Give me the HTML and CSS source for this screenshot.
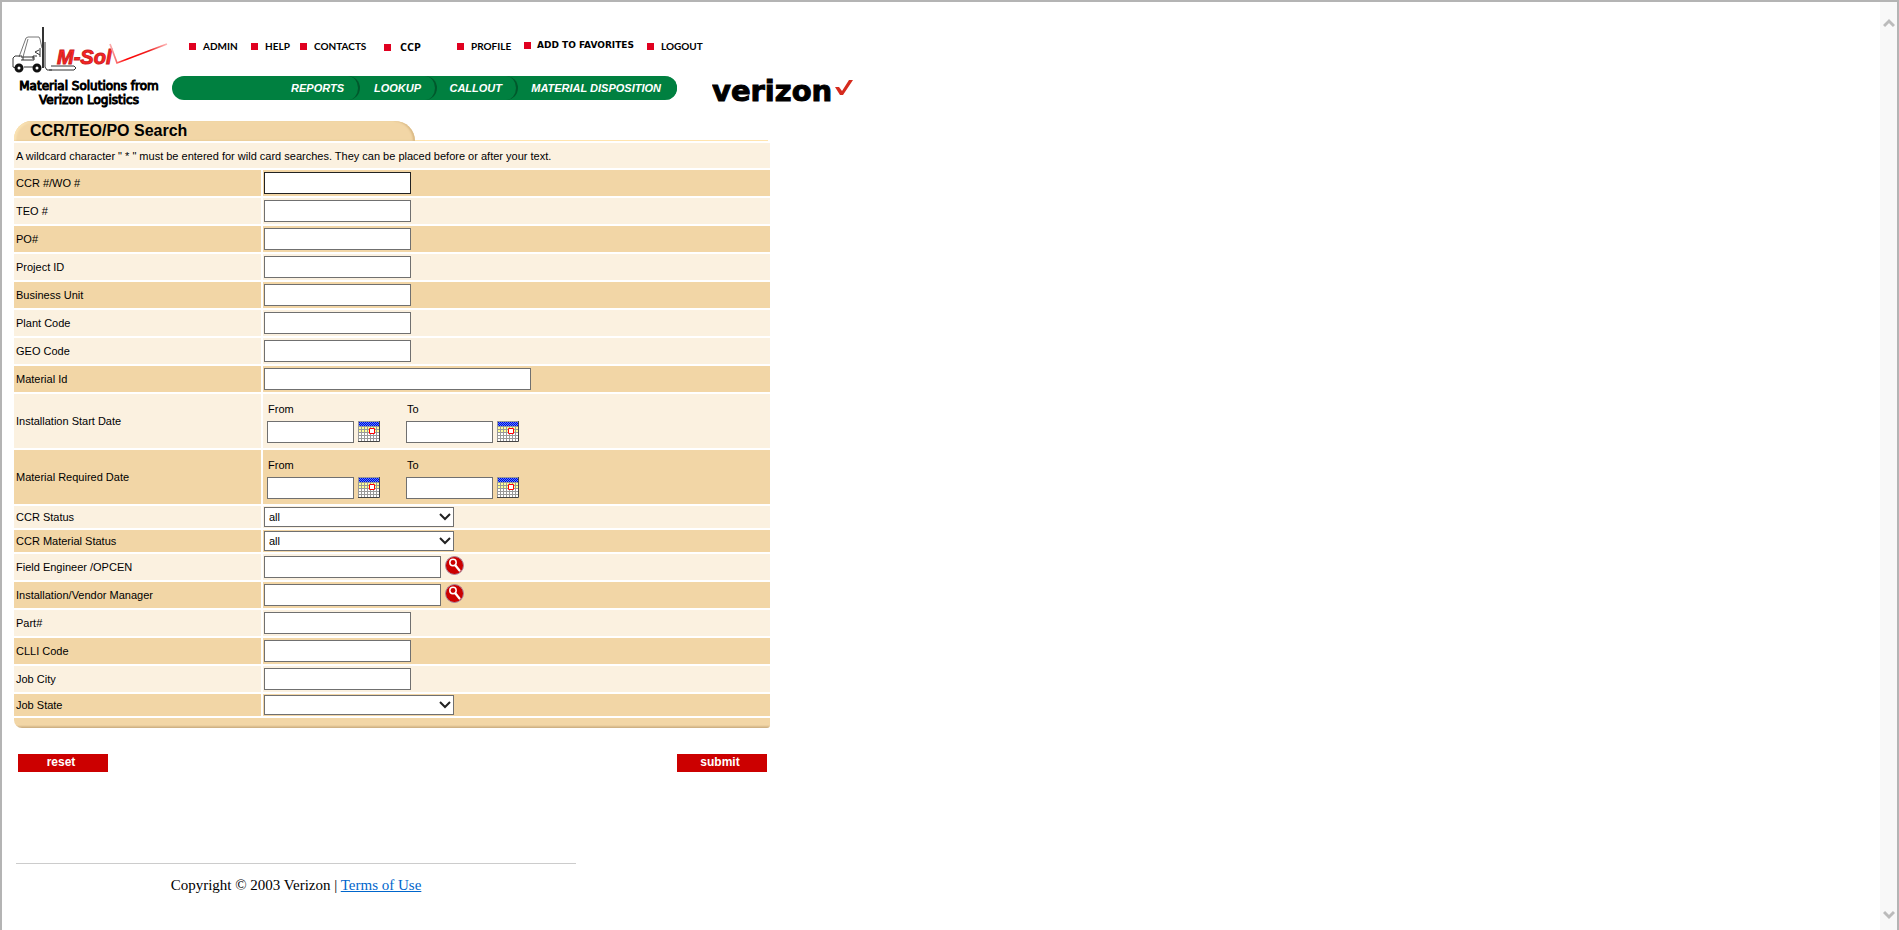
FILE: index.html
```html
<!DOCTYPE html>
<html lang="en">
<head>
<meta charset="utf-8">
<title>CCR/TEO/PO Search</title>
<link rel="stylesheet" href="styles.css">
</head>
<body>
<svg class="defs" aria-hidden="true">
  <symbol id="calendar" viewBox="0 0 22 21">
    <path fill="#fff" d="M0 0h22v21H0z"/>
    <path fill="#ffff99" d="M1 5h20v7H1z"/>
    <path fill="#5588ff" d="M0 0h22v5H0z"/>
    <path stroke="#0000dd" stroke-dasharray="1 1" d="M1 1.500h20M2 2.500h20M1 3.500h20M2 4.500h20"/>
    <path fill="none" stroke="#999" d="M.5 0v20M3.500 5v15M6.500 5v15M9.500 5v15M12.500 5v15M15.500 5v15M18.500 5v15M1 .5h20M1 5.500h20M1 8.500h20M1 11.500h20M1 14.500h20M1 17.500h20"/>
    <path fill="#fff" stroke="#f00" d="M11.500 7.500h5v5h-5z"/>
    <path fill="none" stroke="#444" d="M0 20.500h21.500V0"/>
  </symbol>
  <symbol id="search" viewBox="0 0 19 19">
    <circle cx="9.500" cy="9.500" r="9" fill="#c00" stroke="#a9849c"/>
    <circle cx="8" cy="6.500" r="3.200" fill="none" stroke="#fff" stroke-width="1.500"/>
    <path stroke="#fff" stroke-width="2.200" stroke-linecap="round" d="M10.500 9.500l4 5"/>
  </symbol>
</svg>
<div class="window">
<main class="page">
  <header class="header">
    <div class="brand">
      <svg class="msol" viewBox="0 0 160 50" role="img" aria-label="M-Sol">
        <defs><linearGradient id="fade"><stop offset="0" stop-color="#f9b0b0"/><stop offset=".3" stop-color="#f00"/><stop offset=".7" stop-color="#e22"/><stop offset="1" stop-color="#fbb"/></linearGradient></defs>
        <g fill="none" stroke="#333">
          <path stroke="#777" d="M7 31L14 12l2-1h11l1 2 2 9M16 13l-5 18"/>
          <path d="M11 34v-3M28 22v9M9 31h13v3H9M1 32l2-2h7M1 32v9l3 1M12 41h10M37 44h25l2-2-2-2H39"/>
          <path stroke-width="2" d="M31 1v41"/>
          <path d="M33 16v25l2 3h5M27 24l-4 2 5 3M21 33v-3h4"/>
        </g>
        <g fill="#fff" stroke="#111" stroke-width="3"><circle cx="7" cy="42" r="3"/><circle cx="25" cy="42" r="3"/></g>
        <text class="msol-text" x="45" y="38">M-Sol</text>
        <path fill="none" stroke="url(#fade)" stroke-width="1.700" d="M98 18l7 19 50-19"/>
      </svg>
      <p class="tagline">Material Solutions from<br>Verizon Logistics</p>
    </div>
    <div class="menus">
      <nav class="links">
        <a href="#">ADMIN</a><a href="#">HELP</a><a href="#">CONTACTS</a><a href="#" class="ccp">CCP</a><a href="#">PROFILE</a><a href="#" class="fav">ADD TO FAVORITES</a><a href="#">LOGOUT</a>
      </nav>
      <nav class="tabs">
        <a href="#">REPORTS</a><a href="#">LOOKUP</a><a href="#">CALLOUT</a><a href="#">MATERIAL DISPOSITION</a>
      </nav>
    </div>
    <svg class="verizon" viewBox="0 0 142 26" role="img" aria-label="verizon">
      <text class="verizon-text" x="0" y="23">verizon</text>
      <path fill="#d52b1e" d="M123 9h4l3 4 7-11h4l-10 15h-3z"/>
    </svg>
  </header>

  <form class="search">
    <h1 class="title"><span>CCR/TEO/PO Search</span></h1>
    <table class="fields">
      <tr class="light intro"><td colspan="2">A wildcard character " * " must be entered for wild card searches. They can be placed before or after your text.</td></tr>
      <tr><th><label for="ccr">CCR #/WO #</label></th><td><input id="ccr" class="first" type="text"></td></tr>
      <tr class="light"><th><label for="teo">TEO #</label></th><td><input id="teo" type="text"></td></tr>
      <tr><th><label for="po">PO#</label></th><td><input id="po" type="text"></td></tr>
      <tr class="light"><th><label for="project">Project ID</label></th><td><input id="project" type="text"></td></tr>
      <tr><th><label for="unit">Business Unit</label></th><td><input id="unit" type="text"></td></tr>
      <tr class="light"><th><label for="plant">Plant Code</label></th><td><input id="plant" type="text"></td></tr>
      <tr class="light"><th><label for="geo">GEO Code</label></th><td><input id="geo" type="text"></td></tr>
      <tr><th><label for="material">Material Id</label></th><td><input id="material" class="wide" type="text"></td></tr>
      <tr class="light dates"><th>Installation Start Date</th><td><div class="range">
        <div class="date"><label for="isf">From</label><input id="isf" type="text"><button type="button" aria-label="Choose date"><svg><use href="#calendar"/></svg></button></div>
        <div class="date"><label for="ist">To</label><input id="ist" type="text"><button type="button" aria-label="Choose date"><svg><use href="#calendar"/></svg></button></div>
      </div></td></tr>
      <tr class="dates"><th>Material Required Date</th><td><div class="range">
        <div class="date"><label for="mrf">From</label><input id="mrf" type="text"><button type="button" aria-label="Choose date"><svg><use href="#calendar"/></svg></button></div>
        <div class="date"><label for="mrt">To</label><input id="mrt" type="text"><button type="button" aria-label="Choose date"><svg><use href="#calendar"/></svg></button></div>
      </div></td></tr>
      <tr class="light choice"><th><label for="status">CCR Status</label></th><td><div class="pick"><select id="status"><option>all</option></select><svg viewBox="0 0 12 8"><path d="M1 1l5 5 5-5"/></svg></div></td></tr>
      <tr class="choice"><th><label for="mstatus">CCR Material Status</label></th><td><div class="pick"><select id="mstatus"><option>all</option></select><svg viewBox="0 0 12 8"><path d="M1 1l5 5 5-5"/></svg></div></td></tr>
      <tr class="light"><th><label for="engineer">Field Engineer /OPCEN</label></th><td><div class="lookup"><input id="engineer" type="text"><button type="button" aria-label="Find engineer"><svg><use href="#search"/></svg></button></div></td></tr>
      <tr><th><label for="manager">Installation/Vendor Manager</label></th><td><div class="lookup"><input id="manager" type="text"><button type="button" aria-label="Find manager"><svg><use href="#search"/></svg></button></div></td></tr>
      <tr class="light"><th><label for="part">Part#</label></th><td><input id="part" type="text"></td></tr>
      <tr><th><label for="clli">CLLI Code</label></th><td><input id="clli" type="text"></td></tr>
      <tr class="light"><th><label for="city">Job City</label></th><td><input id="city" type="text"></td></tr>
      <tr class="choice"><th><label for="state">Job State</label></th><td><div class="pick"><select id="state"><option></option></select><svg viewBox="0 0 12 8"><path d="M1 1l5 5 5-5"/></svg></div></td></tr>
    </table>
    <div class="base"></div>
    <div class="actions"><button type="reset">reset</button><button type="submit">submit</button></div>
  </form>

  <footer class="footer">Copyright © 2003 Verizon | <a href="#">Terms of Use</a></footer>
</main>
<div class="scroll">
  <button type="button" aria-label="Scroll up"><svg viewBox="0 0 12 10"><path d="M1 8l5-5 5 5"/></svg></button>
  <button type="button" aria-label="Scroll down"><svg viewBox="0 0 12 10"><path d="M1 2l5 5 5-5"/></svg></button>
</div>
</div>
</body>
</html>
```
FILE: styles.css
```css
* { box-sizing: border-box; }
body { margin: 0; background: #fff; color: #000; font-family: "Liberation Sans", Arial, sans-serif; font-size: 11px; }
.defs { display: none; }
svg { display: block; }
button { border: 0; padding: 0; background: none; font: inherit; cursor: pointer; }

.window { display: flex; min-height: 100vh; border: 2px solid #b4b4b4; border-bottom: 0; }
.page { flex: 1; padding: 24px 0 0 10px; }

.header { display: flex; align-items: flex-start; }
.brand { width: 160px; }
.msol { width: 160px; height: 50px; }
.msol-text { font: italic bold 20px "Liberation Sans", Arial, sans-serif; fill: #f22; stroke: #c22; stroke-width: 1px; }
.tagline { margin: 3px 0 0; padding-right: 6px; text-align: center; font: 12px/14px "DejaVu Sans", sans-serif; -webkit-text-stroke: 1px #000; }

.menus { width: 505px; padding-top: 11px; }
.links { display: grid; grid-template-columns: 62px 49px 84px 73px 67px 123px auto; align-items: center; height: 18px; padding-left: 17px; }
.links a { display: flex; align-items: center; gap: 7px; color: #000; font: bold 10px/12px Lato, sans-serif; text-decoration: none; white-space: nowrap; }
.links a::before { content: ""; flex: none; width: 7px; height: 7px; background: #e00020; }
.links .ccp { gap: 9px; padding-top: 2px; font: bold 11px/12px "Open Sans", sans-serif; }
.links .fav { gap: 6px; padding-bottom: 2px; font: bold 9px/12px "DejaVu Sans", sans-serif; }

.tabs { display: flex; margin-top: 21px; border-radius: 12px; background: #008040; }
.tabs a { height: 24px; padding-right: 14px; border-right: 2px solid #00582c; border-radius: 0 12px 12px 0; color: #fff; font: italic bold 11px/24px "Liberation Sans", Arial, sans-serif; text-align: right; text-decoration: none; white-space: nowrap; }
.tabs a:nth-child(1) { width: 188px; }
.tabs a:nth-child(2) { width: 77px; }
.tabs a:nth-child(3) { width: 81px; }
.tabs a:nth-child(4) { flex: 1; border-right-color: #008040; }

.verizon { width: 142px; height: 26px; margin: 52px 0 0 35px; }
.verizon-text { font: bold 29px "DejaVu Sans", sans-serif; stroke: #000; stroke-width: 1px; }

.search { width: 756px; margin: 14px 0 0 2px; }
.title { display: flex; align-items: flex-end; margin: 0; font-size: 16px; line-height: 20px; }
.title::after { content: ""; flex: 1; height: 1px; margin-right: 2px; background: #ffe4ae; }
.title span { width: 401px; padding-left: 16px; border-radius: 18px 20px 0 0; background: #f2d6a6; box-shadow: inset -2px 0 2px #d9b985, inset 2px 1px 2px #fae3b4; }
.fields { width: 100%; border-collapse: separate; border-spacing: 0 2px; }
.fields th, .fields td { height: 26px; padding: 0 1px; background: #f2d6a6; line-height: 12px; vertical-align: middle; }
.fields th { width: 249px; padding-left: 2px; border-right: 2px solid #fff; font-weight: normal; text-align: left; }
.fields .light th, .fields .light td { background: #fbf1e0; }
.fields .intro td { height: 25px; padding-left: 2px; }
.fields .dates td { height: 54px; }
.fields .choice td, .fields .choice th { height: 22px; }

input, select { display: block; width: 147px; height: 22px; margin: 0; padding: 0 4px; border: 1px solid #707070; border-radius: 0; background: #fff; color: #000; font: inherit; }
input.first { border-color: #222; }
input.wide { width: 267px; }

.range { display: flex; gap: 26px; padding: 4px 0 0 3px; }
.date { display: grid; grid-template-columns: 87px 22px; column-gap: 4px; row-gap: 6px; }
.date label { grid-column: 1 / 3; padding-left: 1px; }
.date input { width: 87px; }
.date button { align-self: start; }
.date svg { width: 22px; height: 21px; }
.pick { display: grid; width: 190px; align-items: center; }
.pick select { grid-area: 1 / 1; width: 190px; height: 20px; appearance: none; }
.pick svg { grid-area: 1 / 1; justify-self: end; width: 12px; height: 8px; margin-right: 3px; pointer-events: none; }
.pick path { fill: none; stroke: #222; stroke-width: 2px; }
.lookup { display: flex; align-items: flex-start; gap: 4px; }
.lookup input { width: 177px; }
.lookup svg { width: 19px; height: 19px; }

.base { height: 10px; border-radius: 0 0 3px 8px; background: linear-gradient(#f2d6a6 70%, #c8aa7c); }
.actions { display: flex; justify-content: space-between; padding: 26px 3px 0 4px; }
.actions button { width: 90px; height: 18px; padding: 0 4px 2px 0; background: #c00; color: #fff; font-size: 12px; font-weight: bold; line-height: 16px; }

.footer { width: 560px; margin: 91px 0 0 4px; padding-top: 11px; border-top: 1px solid #ccc; text-align: center; font: 15px/20px "Liberation Serif", "Times New Roman", serif; }
.footer a { color: #0066cc; }

.scroll { display: flex; flex-direction: column; justify-content: space-between; width: 17px; padding: 16px 0 10px; background: #f8f8f8; }
.scroll svg { width: 12px; height: 10px; margin: 0 auto; }
.scroll path { fill: none; stroke: #bbb; stroke-width: 3px; }
```
